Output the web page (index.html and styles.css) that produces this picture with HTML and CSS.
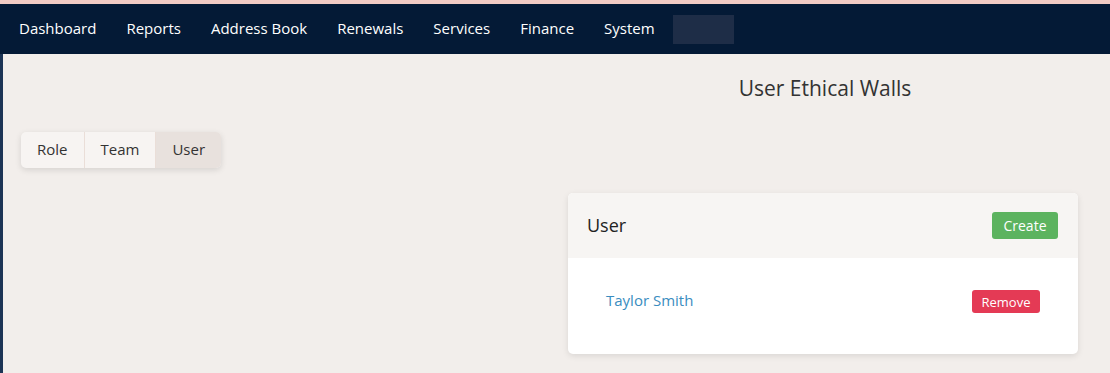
FILE: index.html
```html
<!DOCTYPE html>
<html>
<head>
<meta charset="utf-8">
<link rel="stylesheet" href="styles.css">
</head>
<body>
<div class="topstrip"></div>
<nav class="navbar">
  <a class="nav-item">Dashboard</a>
  <a class="nav-item">Reports</a>
  <a class="nav-item">Address Book</a>
  <a class="nav-item">Renewals</a>
  <a class="nav-item">Services</a>
  <a class="nav-item">Finance</a>
  <a class="nav-item">System</a>
  <span class="nav-block"></span>
</nav>
<main class="main">
  <section class="left-col">
    <div class="tabs">
      <button class="tab">Role</button>
      <button class="tab">Team</button>
      <button class="tab active">User</button>
    </div>
  </section>
  <section class="right-col">
    <h1 class="title">User Ethical Walls</h1>
    <div class="card">
      <div class="card-header">
        <span class="card-title">User</span>
        <button class="btn btn-create">Create</button>
      </div>
      <div class="card-body">
        <div class="row">
          <a class="name">Taylor Smith</a>
          <button class="btn btn-remove">Remove</button>
        </div>
      </div>
    </div>
  </section>
</main>
</body>
</html>
```
FILE: styles.css
```css
* { box-sizing: border-box; }
html, body { margin: 0; padding: 0; }
body {
  font-family: "Open Sans", "Noto Sans", sans-serif;
  background: #f2eeeb;
  height: 373px;
  overflow: hidden;
}
.topstrip { height: 4px; background: #f2cbc4; }
.navbar {
  height: 50px;
  background: #041a36;
  display: flex;
  align-items: center;
  padding-left: 4px;
}
.nav-item {
  color: #ffffff;
  font-size: 15px;
  padding: 0 15px;
  line-height: 20px;
  margin-top: -2px;
}
.nav-block {
  display: block;
  width: 61px;
  height: 29px;
  background: #1e2d47;
  margin-left: 3px;
  margin-top: 0;
}
.main {
  display: grid;
  grid-template-columns: 550px 1fr;
  border-left: 3px solid #1c3455;
  height: 319px;
}
.left-col { padding: 78px 0 0 18px; }
.tabs {
  display: inline-flex;
  background: #f7f4f2;
  border-radius: 5px;
  box-shadow: 0 2px 6px rgba(0,0,0,0.12);
  overflow: hidden;
}
.tab {
  font-family: inherit;
  font-size: 15px;
  color: #333;
  background: transparent;
  border: none;
  height: 36px;
  padding: 0 16px 2px;
  border-left: 1px solid #eaded8;
}
.tab:first-child { border-left: none; }
.tab.active { background: #e8e1dd; }
.right-col { padding: 20px 32px 0 15px; }
.title {
  margin: 0;
  padding-left: 4px;
  font-size: 21px;
  font-weight: 400;
  line-height: 28px;
  color: #333;
  text-align: center;
}
.card {
  margin-top: 91px;
  background: #fff;
  border-radius: 5px;
  box-shadow: 0 2px 6px rgba(0,0,0,0.1);
  overflow: hidden;
}
.card-header {
  height: 65px;
  background: #f7f5f3;
  display: flex;
  align-items: center;
  justify-content: space-between;
  padding: 0 20px 2px 19px;
}
.card-title { font-size: 18px; font-weight: 500; color: #222; }
.btn {
  font-family: inherit;
  color: #fff;
  border: none;
  border-radius: 3px;
}
.btn-create {
  background: #5cb35f;
  font-size: 14px;
  width: 66px;
  height: 27px;
  padding: 0;
  margin-top: 2px;
}
.card-body { height: 96px; padding: 32px 38px 0; }
.row { display: flex; justify-content: space-between; align-items: center; height: 23px; }
.name { font-size: 15px; color: #3a8dc0; margin-top: -3px; }
.btn-remove {
  background: #e43a55;
  font-size: 13px;
  width: 68px;
  height: 23px;
  padding: 0;
}
```
